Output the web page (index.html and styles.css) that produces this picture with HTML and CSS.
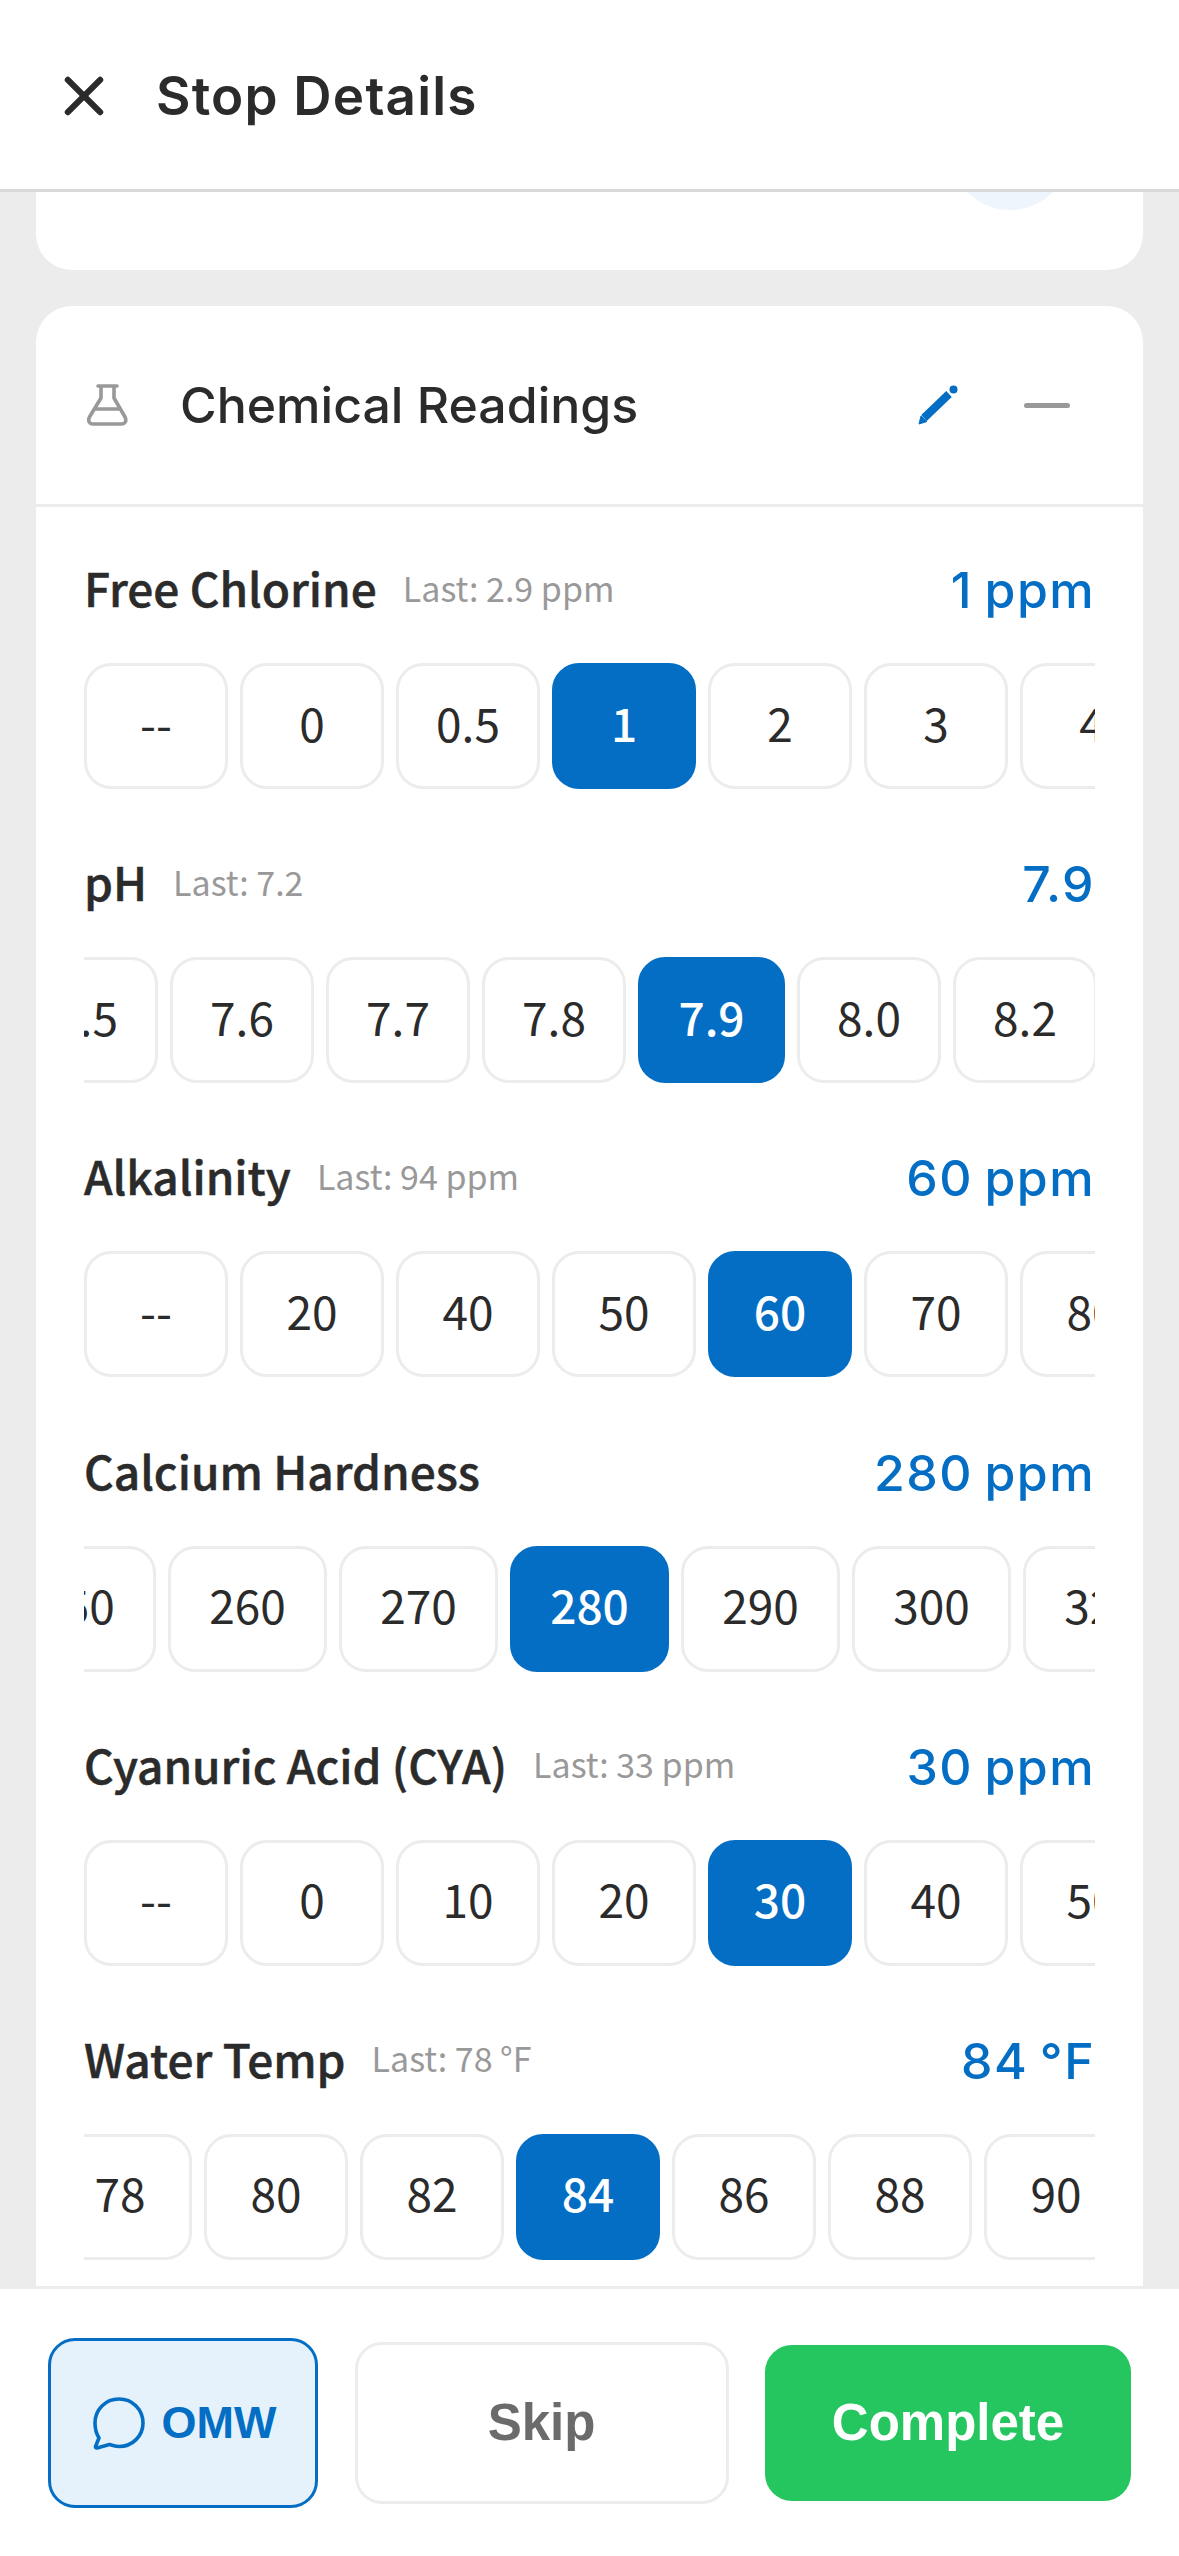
FILE: index.html
```html
<!DOCTYPE html>
<html lang="en">
<head>
<meta charset="UTF-8"/>
<meta name="viewport" content="width=device-width, initial-scale=1.0"/>
<title>Stop Details</title>
<link rel="stylesheet" href="styles.css">
</head>
<body>
  <header class="topbar">
    <svg class="close-icon" viewBox="0 0 40 40"><path d="M3 3 L37 37 M37 3 L3 37"/></svg>
    <h1>Stop Details</h1>
  </header>

  <main class="content">
    <section class="card card-prev">
      <div class="fab-circle"></div>
    </section>

    <section class="card">
      <div class="card-head">
        <svg class="flask-icon" viewBox="0 0 41 42"><path d="M14 2 V14 L2.5 33 C0.5 37 2.5 40 6 40 H34.5 C38 40 40 37 38 33 L27 14 V2 M11 2 H30 M8 25 H33"/></svg>
        <h2>Chemical Readings</h2>
        <svg class="pencil-icon" viewBox="0 0 40 40"><path class="pencil-body" d="M6 33 L31 9"/><path class="pencil-tip" d="M1 39 L3 31 L9 36.5 Z"/><circle class="pencil-dot" cx="35.5" cy="4.5" r="4"/></svg>
        <span class="collapse-icon"></span>
      </div>

      <div class="card-body">
        <div class="reading">
          <div class="reading-top">
            <span class="reading-name">Free Chlorine</span>
            <span class="reading-last">Last: 2.9 ppm</span>
            <span class="reading-value">1 ppm</span>
          </div>
          <div class="chip-scroll">
            <div class="chip-track">
              <span class="chip">--</span><span class="chip">0</span><span class="chip">0.5</span><span class="chip on">1</span><span class="chip">2</span><span class="chip">3</span><span class="chip">4</span>
            </div>
          </div>
        </div>

        <div class="reading">
          <div class="reading-top">
            <span class="reading-name">pH</span>
            <span class="reading-last">Last: 7.2</span>
            <span class="reading-value">7.9</span>
          </div>
          <div class="chip-scroll">
            <div class="chip-track scrolled-ph">
              <span class="chip">7.5</span><span class="chip">7.6</span><span class="chip">7.7</span><span class="chip">7.8</span><span class="chip on">7.9</span><span class="chip">8.0</span><span class="chip">8.2</span>
            </div>
          </div>
        </div>

        <div class="reading">
          <div class="reading-top">
            <span class="reading-name">Alkalinity</span>
            <span class="reading-last">Last: 94 ppm</span>
            <span class="reading-value">60 ppm</span>
          </div>
          <div class="chip-scroll">
            <div class="chip-track">
              <span class="chip">--</span><span class="chip">20</span><span class="chip">40</span><span class="chip">50</span><span class="chip on">60</span><span class="chip">70</span><span class="chip">80</span>
            </div>
          </div>
        </div>

        <div class="reading">
          <div class="reading-top">
            <span class="reading-name">Calcium Hardness</span>
            <span class="reading-value">280 ppm</span>
          </div>
          <div class="chip-scroll">
            <div class="chip-track scrolled-ca">
              <span class="chip">250</span><span class="chip">260</span><span class="chip">270</span><span class="chip on">280</span><span class="chip">290</span><span class="chip">300</span><span class="chip">320</span>
            </div>
          </div>
        </div>

        <div class="reading">
          <div class="reading-top">
            <span class="reading-name">Cyanuric Acid (CYA)</span>
            <span class="reading-last">Last: 33 ppm</span>
            <span class="reading-value">30 ppm</span>
          </div>
          <div class="chip-scroll">
            <div class="chip-track">
              <span class="chip">--</span><span class="chip">0</span><span class="chip">10</span><span class="chip">20</span><span class="chip on">30</span><span class="chip">40</span><span class="chip">50</span>
            </div>
          </div>
        </div>

        <div class="reading">
          <div class="reading-top">
            <span class="reading-name">Water Temp</span>
            <span class="reading-last">Last: 78 °F</span>
            <span class="reading-value">84 °F</span>
          </div>
          <div class="chip-scroll">
            <div class="chip-track scrolled-temp">
              <span class="chip">78</span><span class="chip">80</span><span class="chip">82</span><span class="chip on">84</span><span class="chip">86</span><span class="chip">88</span><span class="chip">90</span>
            </div>
          </div>
        </div>
      </div>
    </section>
  </main>

  <footer class="actions">
    <button class="btn btn-omw">
      <svg class="chat-icon" viewBox="0 0 52 52"><path d="M26 2 C39.5 2 50 12.5 50 26 C50 39 39.5 49.5 26 49.5 C22.5 49.5 19.5 48.5 16.5 47.5 L4 51 C3 51 2.5 50.5 2.5 49.5 L6 41 C3.5 37 2 32 2 26 C2 12.5 12.5 2 26 2 Z"/></svg>
      OMW
    </button>
    <button class="btn btn-skip">Skip</button>
    <button class="btn btn-complete">Complete</button>
  </footer>
</body>
</html>
```

FILE: styles.css
```css
* { box-sizing: border-box; }
html, body { margin: 0; height: 2556px; overflow: hidden; }
body { display: flex; flex-direction: column; background: #ececec; color: #2b2b2b; font-family: "Noto Sans CJK SC", "Noto Sans", sans-serif; }
h1, h2 { margin: 0; font-family: Inter, sans-serif; }

.topbar { flex: none; display: flex; align-items: center; height: 192px; padding: 3px 0 0 65px; background: #fff; border-bottom: 3px solid #d9d9d9; }
.topbar h1 { margin-left: 53px; font-size: 53px; font-weight: 600; letter-spacing: 1.2px; line-height: 1; }
.close-icon { width: 38px; height: 38px; overflow: visible; fill: none; stroke: #2b2b2b; stroke-width: 6.5; stroke-linecap: round; }

.content { flex: 1; min-height: 0; overflow: hidden; padding: 0 36px; }
.card { background: #fff; border-radius: 36px; }
.card-prev { display: flex; justify-content: flex-end; align-items: flex-end; height: 78px; margin-bottom: 36px; padding: 0 73px 60px 0; border-radius: 0 0 36px 36px; overflow: hidden; }
.fab-circle { flex: none; width: 120px; height: 120px; border-radius: 50%; background: #eff5fc; }

.card-head { display: flex; align-items: center; height: 201px; padding: 0 73px 0 51px; border-bottom: 3px solid #ececec; }
.card-head h2 { flex: 1; margin-left: 52px; font-size: 50px; font-weight: 530; line-height: 1; }
.flask-icon { width: 41px; height: 42px; fill: none; stroke: #999; stroke-width: 3.6; stroke-linecap: round; stroke-linejoin: round; }
.pencil-icon { width: 40px; height: 40px; margin-right: 66px; }
.pencil-body { fill: none; stroke: #036ec4; stroke-width: 8; }
.pencil-tip { fill: #036ec4; stroke: #036ec4; stroke-linejoin: round; }
.pencil-dot { fill: #036ec4; }
.collapse-icon { width: 46px; height: 5px; border-radius: 3px; background: #999; }

.card-body { padding: 50px 48px 40px; }
.reading { margin-bottom: 62.2px; }
.reading-top { display: flex; align-items: center; height: 66px; margin-bottom: 40px; }
.reading-name { padding-bottom: 6px; font-size: 46px; font-weight: 500; -webkit-text-stroke: 0.5px #2b2b2b; }
.reading-last { margin-left: 26px; padding-bottom: 6px; font-size: 34px; color: #999; }
.reading-value { margin-left: auto; font-family: Inter, sans-serif; font-size: 50px; font-weight: 550; letter-spacing: 1.4px; word-spacing: -3px; color: #036ec4; }

.chip-scroll { overflow: hidden; }
.chip-track { display: flex; gap: 12px; }
.scrolled-ph { margin-left: -70px; }
.scrolled-ph .on { min-width: 147px; }
.scrolled-ca { margin-left: -87px; }
.scrolled-ca .chip { min-width: 159px; }
.scrolled-temp { margin-left: -36px; }
.chip { flex: none; display: flex; align-items: center; justify-content: center; min-width: 144px; height: 126px; padding: 0 20px 9px; border: 3px solid #ececec; border-radius: 27px; font-size: 46px; }
.chip.on { background: #036ec4; border-color: #036ec4; color: #fff; font-weight: 500; }

.actions { flex: none; display: flex; align-items: center; height: 270px; padding: 0 48px; gap: 36.5px; background: #fff; border-top: 3px solid #ececec; }
.btn { display: flex; align-items: center; justify-content: center; padding: 0; font-family: "Liberation Sans", Arial, sans-serif; font-weight: 700; font-size: 51px; border-radius: 27px; }
.btn-omw { flex: none; width: 270px; height: 170px; padding-left: 3px; gap: 17px; font-size: 45px; color: #036ec4; background: #e5f2fb; border: 3px solid #036ec4; }
.btn-skip { flex: none; width: 374px; height: 162px; color: #6b6b6b; background: #fff; border: 3px solid #ececec; }
.btn-complete { flex: none; width: 366px; height: 156px; color: #fff; background: #25c660; border: none; }
.chat-icon { width: 52px; height: 52px; overflow: visible; fill: none; stroke: #036ec4; stroke-width: 3.6; stroke-linejoin: round; }
```
